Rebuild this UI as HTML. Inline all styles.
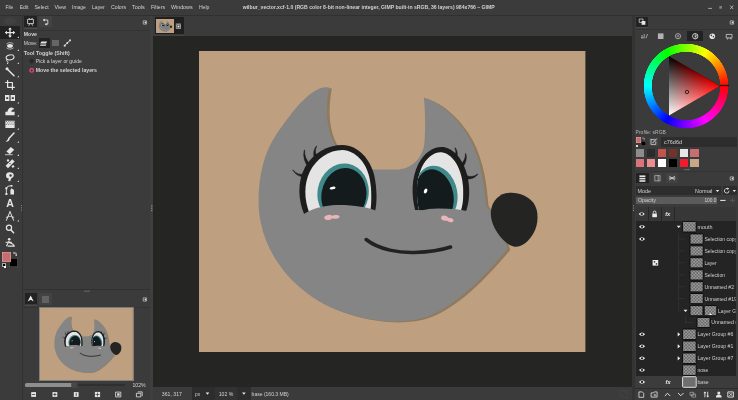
<!DOCTYPE html>
<html><head><meta charset="utf-8"><title>GIMP</title>
<style>
html,body{margin:0;padding:0;background:#3b3b3b;}
body{width:738px;height:400px;position:relative;overflow:hidden;font-family:"Liberation Sans",sans-serif;font-size:5.2px;color:#dcdcdc;line-height:1;}
.a{position:absolute;}
svg{position:absolute;}
svg text{font-family:"Liberation Sans",sans-serif;}
#wheel{position:absolute;left:643.4px;top:43.2px;width:85.4px;height:85.4px;border-radius:50%;
 background:conic-gradient(from 90deg,#ff0000,#ff00ff,#0000ff,#00ffff,#00ff00,#ffff00,#ff0000);
 -webkit-mask:radial-gradient(circle closest-side,transparent 33.9px,#000 34.4px,#000 42px,transparent 42.5px);
 mask:radial-gradient(circle closest-side,transparent 33.9px,#000 34.4px,#000 42px,transparent 42.5px);}
</style></head><body>
<svg width="0" height="0" style="left:0;top:0"><defs>
<symbol id="wilbur" viewBox="199.4 51 386.4 301" preserveAspectRatio="none">
<rect x="199" y="50" width="388" height="303" fill="#bea080"/>
<path d="M329.5 87.5 C326.5 87 323.5 87.2 320.5 88.25 C304 95 289 116.8 277 134 C264 152.7 259 177.2 259 200 C259 208 259.5 215 261 222 C269 262 300 296 340 311 C370 322 405 325 428 316.5 C457 306 487 274 508 249 L500 225 L486.3 205 L485.75 200 C483.9 176.5 479.1 151.6 466 132 C456 117 441.5 102.9 424.3 97.5 C425 104 425.6 116 425.5 127.5 L425 140 C424.4 158 412 169.6 396 169.6 L376 169.6 C352 169.6 328.3 150 327.3 113 C327.2 104 328.2 95 329.5 87.5 Z" fill="#907a5e" transform="translate(2.7,1)"/>
<path d="M329.5 87.5 C326.5 87 323.5 87.2 320.5 88.25 C304 95 289 116.8 277 134 C264 152.7 259 177.2 259 200 C259 208 259.5 215 261 222 C269 262 300 296 340 311 C370 322 405 325 428 316.5 C457 306 487 274 508 249 L500 225 L486.3 205 L485.75 200 C483.9 176.5 479.1 151.6 466 132 C456 117 441.5 102.9 424.3 97.5 C425 104 425.6 116 425.5 127.5 L425 140 C424.4 158 412 169.6 396 169.6 L376 169.6 C352 169.6 328.3 150 327.3 113 C327.2 104 328.2 95 329.5 87.5 Z" fill="#868585"/>
<clipPath id="lw"><path d="M309.8 213 C304.8 200 303.8 185 310.3 171.5 C317 158.5 329 150 343 150 C356 151 366 161.5 369.8 177.5 C372.4 190 372.4 202 370.6 211 Z"/></clipPath>
<clipPath id="rw"><path d="M419.4 210 C416.3 195 416.3 180 422 167.8 C426.8 157.5 434.5 151.4 443 152.4 C454 154.4 462.6 169.5 463.6 188 C464.1 198 463.2 205 461.2 211 Z"/></clipPath>
<g>
<path d="M304.5 214 C298.5 200 297.5 182 305.5 167 C313.5 153 328 145 343 145 C358.5 145.5 370.5 158.5 374.8 176 C377.5 190 377.5 202 375.5 211 Z" fill="#1d1d1d"/>
<g clip-path="url(#lw)">
<rect x="295" y="140" width="90" height="80" fill="#e4e4e4"/>
<ellipse cx="343.5" cy="193" rx="25.6" ry="29.6" fill="#3f898b" transform="rotate(10 343.5 193)"/>
<ellipse cx="344.3" cy="195.2" rx="22.4" ry="27.4" fill="#131b1c" transform="rotate(10 344.3 195.2)"/>
<ellipse cx="333" cy="188" rx="3" ry="1.4" fill="#fff" transform="rotate(-12 333 188)"/>
</g></g>
<g>
<path d="M415.5 210 C411.7 195 411.7 178 418.7 164 C424.7 152 434.5 146 444 147 C458.5 149.5 468.5 168 469.5 188 C470 198 468.5 205 466.5 211 Z" fill="#1d1d1d"/>
<g clip-path="url(#rw)">
<rect x="405" y="140" width="70" height="80" fill="#e4e4e4"/>
<ellipse cx="436.4" cy="194" rx="21.3" ry="28.5" fill="#3f898b" transform="rotate(-11 436.4 194)"/>
<ellipse cx="434.8" cy="196" rx="19" ry="27" fill="#131b1c" transform="rotate(-11 434.8 196)"/>
<ellipse cx="426" cy="191" rx="1.6" ry="2.6" fill="#fff" transform="rotate(25 426 191)"/>
</g></g>
<path d="M296 224 C300 212 320 205 340 205 C355 205 368 207 380 212 L380 226 L296 226 Z" fill="#868585"/>
<path d="M408 224 C412 211 425 208.5 440 208.5 C452 208.5 462 209.5 472 212 L472 226 L408 226 Z" fill="#868585"/>
<ellipse cx="328.8" cy="217.4" rx="4.2" ry="2.5" fill="#e9b5ba" transform="rotate(-8 328.8 217.4)"/>
<ellipse cx="336" cy="216.9" rx="4" ry="1.8" fill="#e9b5ba" transform="rotate(-5 336 216.9)"/>
<ellipse cx="445" cy="218.2" rx="3.6" ry="2.5" fill="#e9b5ba" transform="rotate(15 445 218.2)"/>
<ellipse cx="450.5" cy="220" rx="3.4" ry="2.1" fill="#e9b5ba" transform="rotate(15 450.5 220)"/>
<g fill="#1d1d1d" stroke="#1d1d1d" stroke-width="0.5" stroke-linejoin="round">
<path d="M306.1 173.5 Q298.3 176.2 293.5 169.9 L293.1 170.1 Q297.7 177.8 306.9 176.9 Z"/>
<path d="M311.3 164.8 Q304.4 158.7 305.0 150.0 L304.6 150.0 Q302.6 159.3 308.7 167.2 Z"/>
<path d="M318.3 157.7 Q313.9 152.0 317.2 146.1 L316.8 145.9 Q312.1 152.0 315.3 159.5 Z"/>
<path d="M465.5 178.7 Q473.2 180.1 478.2 174.4 L477.8 174.0 Q472.8 178.3 466.5 175.3 Z"/>
<path d="M462.8 168.1 Q468.3 160.2 466.2 153.6 L465.8 153.6 Q466.3 159.8 460.2 165.9 Z"/>
<path d="M456.2 159.8 Q459.7 153.0 455.6 147.7 L455.2 147.9 Q457.9 153.0 453.4 157.8 Z"/>
</g>
<path d="M366.5 239.5 C380 250 400 253 415 252.5 C430 252 442 250 451 247" fill="none" stroke="#222" stroke-width="3.5" stroke-linecap="round"/>
<path d="M491.2 214 C491 204 497 195.5 506 193.3 C516 191 528 195 534 203 C539.5 211 539 224 534 233 C529 242 521 248 514 246.5 C507 245 499 236 494.5 227 C492.5 223 491.3 218 491.2 214 Z" fill="#242423"/>
</symbol>
<pattern id="chk" x="0.4" y="0.2" width="3.2" height="3.2" patternUnits="userSpaceOnUse"><rect width="3.2" height="3.2" fill="#696969"/><rect width="1.6" height="1.6" fill="#9b9b9b"/><rect x="1.6" y="1.6" width="1.6" height="1.6" fill="#9b9b9b"/></pattern>
<clipPath id="layclip"><rect x="635.5" y="220.6" width="100.2" height="167.4"/></clipPath>
<linearGradient id="g1" gradientUnits="userSpaceOnUse" x1="669" y1="56.6" x2="694.46" y2="100.73"><stop offset="0" stop-color="#000000"/><stop offset="1" stop-color="#ff0000"/></linearGradient>
<linearGradient id="g2" gradientUnits="userSpaceOnUse" x1="694.46" y1="71.27" x2="669" y2="115.4"><stop offset="0" stop-color="#000000"/><stop offset="1" stop-color="#00ffff"/></linearGradient>
</defs></svg>
<div class="a" style="left:0px;top:0px;width:738px;height:400px;background:#3b3b3b;"></div>
<div class="a" style="left:0px;top:14.5px;width:738px;height:1px;background:#303030;"></div>
<div class="a" style="left:153.3px;top:36px;width:478.7px;height:350.8px;background:#252524;"></div>
<div class="a" style="left:150.2px;top:16px;width:3.1px;height:384px;background:#3f3f3f;"></div>
<div class="a" style="left:632px;top:16px;width:3.4px;height:384px;background:#343434;"></div>
<div class="a" style="left:0px;top:26.3px;width:19.8px;height:12.4px;background:#222222;"></div>
<div class="a" style="left:21.6px;top:16px;width:1px;height:384px;background:#323232;"></div>
<div class="a" style="left:24.4px;top:16.2px;width:12.6px;height:11px;background:#222222;"></div>
<div class="a" style="left:24.4px;top:28px;width:12.6px;height:0.8px;background:#4a4a4a;"></div>
<div class="a" style="left:39.3px;top:16.2px;width:12.3px;height:11px;background:#424242;"></div>
<div class="a" style="left:23px;top:29.6px;width:127px;height:0.7px;background:#333333;"></div>
<div class="a" style="left:38.9px;top:38.4px;width:10.9px;height:9.2px;background:#222222;"></div>
<div class="a" style="left:52.4px;top:40px;width:6.5px;height:6.4px;background:#666666;"></div>
<div class="a" style="left:23px;top:289.2px;width:127px;height:0.7px;background:#303030;"></div>
<div class="a" style="left:24.6px;top:292.8px;width:12.3px;height:11.1px;background:#222222;"></div>
<div class="a" style="left:24.6px;top:304.6px;width:12.3px;height:0.8px;background:#4a4a4a;"></div>
<div class="a" style="left:39.3px;top:292.8px;width:12.4px;height:12.2px;background:#424242;"></div>
<div class="a" style="left:42.1px;top:296px;width:7px;height:7px;background:#626262;"></div>
<div class="a" style="left:23px;top:306.6px;width:127px;height:0.7px;background:#333333;"></div>
<div class="a" style="left:153.3px;top:386.8px;width:478.7px;height:13.2px;background:#3b3b3b;"></div>
<div class="a" style="left:191.7px;top:387px;width:22.9px;height:13px;background:#2d2d2d;"></div>
<div class="a" style="left:215px;top:387px;width:22px;height:13px;background:#323232;"></div>
<div class="a" style="left:237px;top:387px;width:13.6px;height:13px;background:#2d2d2d;"></div>
<div class="a" style="left:636.1px;top:16.7px;width:12.2px;height:9.9px;background:#222222;"></div>
<div class="a" style="left:636.1px;top:27.4px;width:12.2px;height:0.8px;background:#4a4a4a;"></div>
<div class="a" style="left:635.4px;top:29.2px;width:102.6px;height:0.7px;background:#333333;"></div>
<div class="a" style="left:687.4px;top:31px;width:15.8px;height:9.8px;background:#222222;"></div>
<div class="a" style="left:661px;top:137px;width:76px;height:9.8px;background:#2d2d2d;"></div>
<div class="a" style="left:649px;top:137.7px;width:8.8px;height:8.8px;background:#454545;"></div>
<div class="a" style="left:641px;top:141.4px;width:4.5px;height:5.1px;background:#000000;box-shadow:inset 0 0 0 0.4px #666;"></div>
<div class="a" style="left:636.1px;top:137.4px;width:4.9px;height:5.4px;background:#c76d6d;box-shadow:inset 0 0 0 0.5px #e0a0a0;"></div>
<div class="a" style="left:636.1px;top:148.7px;width:8.1px;height:8.3px;background:#8c8c8c;"></div>
<div class="a" style="left:646.97px;top:148.7px;width:8.1px;height:8.3px;background:#2b2b2b;"></div>
<div class="a" style="left:657.84px;top:148.7px;width:8.1px;height:8.3px;background:#c4524e;"></div>
<div class="a" style="left:668.71px;top:148.7px;width:8.1px;height:8.3px;background:#74322a;"></div>
<div class="a" style="left:679.58px;top:148.7px;width:8.1px;height:8.3px;background:#e6e6e6;"></div>
<div class="a" style="left:690.45px;top:148.7px;width:8.1px;height:8.3px;background:#c96d70;"></div>
<div class="a" style="left:636.1px;top:159px;width:8.1px;height:8.1px;background:#d9747a;"></div>
<div class="a" style="left:646.97px;top:159px;width:8.1px;height:8.1px;background:#ec8d90;"></div>
<div class="a" style="left:657.84px;top:159px;width:8.1px;height:8.1px;background:#ffffff;"></div>
<div class="a" style="left:668.71px;top:159px;width:8.1px;height:8.1px;background:#000000;"></div>
<div class="a" style="left:679.58px;top:159px;width:8.1px;height:8.1px;background:#f01c2d;"></div>
<div class="a" style="left:690.45px;top:159px;width:8.1px;height:8.1px;background:#c8a786;"></div>
<div class="a" style="left:635.4px;top:170.8px;width:102.6px;height:0.7px;background:#333333;"></div>
<div class="a" style="left:636.1px;top:172.9px;width:12.6px;height:10.5px;background:#222222;"></div>
<div class="a" style="left:652.8px;top:172.9px;width:9.6px;height:10.5px;background:#424242;"></div>
<div class="a" style="left:665.9px;top:172.9px;width:12.2px;height:10.5px;background:#424242;"></div>
<div class="a" style="left:636.1px;top:186.4px;width:84.9px;height:8.7px;background:#2d2d2d;"></div>
<div class="a" style="left:722.8px;top:186.4px;width:14.3px;height:8.7px;background:#2d2d2d;"></div>
<div class="a" style="left:636.1px;top:196.5px;width:81.1px;height:7.9px;background:#5c5c5c;"></div>
<div class="a" style="left:635.5px;top:206.9px;width:100.2px;height:181.6px;background:#242424;"></div>
<div class="a" style="left:635.5px;top:206.9px;width:100.2px;height:13.7px;background:#373737;"></div>
<div class="a" style="left:648.3px;top:206.9px;width:0.6px;height:14px;background:#262626;"></div>
<div class="a" style="left:661px;top:206.9px;width:0.6px;height:14px;background:#262626;"></div>
<div class="a" style="left:674px;top:206.9px;width:0.6px;height:14px;background:#262626;"></div>
<div class="a" style="left:635.5px;top:376.3px;width:100.2px;height:11.4px;background:#3c3c3c;"></div>
<div class="a" style="left:635.4px;top:388.5px;width:102.6px;height:11.5px;background:#3b3b3b;"></div>
<div class="a" style="left:635.4px;top:388.3px;width:102.6px;height:0.6px;background:#2c2c2c;"></div>
<div class="a" style="left:9px;top:258px;width:8.6px;height:8.6px;background:#000000;box-shadow:inset 0 0 0 0.6px #6a6a6a;"></div>
<div class="a" style="left:2.4px;top:252.4px;width:9px;height:9.2px;background:#c76d6d;box-shadow:inset 0 0 0 0.6px #dca4a4;"></div>
<div class="a" style="left:3.2px;top:264.4px;width:2px;height:2px;background:#000;outline:0.4px solid #aaa;"></div>
<div class="a" style="left:4.4px;top:265.6px;width:2px;height:2px;background:#fff;"></div>
<div class="a" style="left:24.9px;top:383.8px;width:99.7px;height:2.4px;background:#2f2f2f;border-radius:1.2px;"></div>
<div class="a" style="left:24.6px;top:383.4px;width:48px;height:3.2px;background:#8e8e8e;border-radius:1.6px;"></div>
<div class="a" style="left:636.4px;top:145.3px;width:1.4px;height:1.4px;background:#ddd;"></div>
<svg style="left:199.4px;top:51px;overflow:hidden" width="386.4" height="301"><use href="#wilbur" x="0" y="0" width="386.4" height="301"/></svg>
<!-- nav thumbnail -->
<svg style="left:40.2px;top:308.1px;overflow:hidden;outline:0.4px solid rgba(255,255,255,0.35)" width="92.9" height="72.2"><use href="#wilbur" x="0" y="0" width="92.9" height="72.2"/></svg>
<!-- tab thumbnail -->
<div class="a" style="left:155.2px;top:16.9px;width:28.7px;height:17.6px;background:#1f1f1f"></div>
<div class="a" style="left:155px;top:34.6px;width:29px;height:1px;background:#444"></div>
<svg style="left:155.8px;top:18.8px;overflow:hidden" width="18.4" height="14"><use href="#wilbur" x="0" y="0" width="18.4" height="14"/></svg>
<div id="wheel"></div>
<svg style="left:0;top:0;isolation:isolate" width="738" height="400" viewBox="0 0 738 400">
<polygon points="720,86 669,56.6 669,115.4" fill="url(#g1)"/>
<polygon points="720,86 669,56.6 669,115.4" fill="url(#g2)" style="mix-blend-mode:screen"/>
</svg>
<svg style="left:0;top:0;will-change:transform;opacity:0.999" width="738" height="400" viewBox="0 0 738 400">
<path d="M719.8 85.5 H729" stroke="#111" stroke-width="1.2"/>
<circle cx="687" cy="92" r="1.7" fill="none" stroke="#111" stroke-width="0.8"/>
<text x="5.5" y="9.31" font-size="5.3" fill="#d4d4d4" textLength="7.7" lengthAdjust="spacingAndGlyphs" text-anchor="start">File</text>
<text x="19.8" y="9.31" font-size="5.3" fill="#d4d4d4" textLength="8.5" lengthAdjust="spacingAndGlyphs" text-anchor="start">Edit</text>
<text x="34.4" y="9.31" font-size="5.3" fill="#d4d4d4" textLength="14.3" lengthAdjust="spacingAndGlyphs" text-anchor="start">Select</text>
<text x="54.5" y="9.31" font-size="5.3" fill="#d4d4d4" textLength="11.5" lengthAdjust="spacingAndGlyphs" text-anchor="start">View</text>
<text x="72" y="9.31" font-size="5.3" fill="#d4d4d4" textLength="13.8" lengthAdjust="spacingAndGlyphs" text-anchor="start">Image</text>
<text x="91.9" y="9.31" font-size="5.3" fill="#d4d4d4" textLength="12.9" lengthAdjust="spacingAndGlyphs" text-anchor="start">Layer</text>
<text x="111" y="9.31" font-size="5.3" fill="#d4d4d4" textLength="15.0" lengthAdjust="spacingAndGlyphs" text-anchor="start">Colors</text>
<text x="132" y="9.31" font-size="5.3" fill="#d4d4d4" textLength="12.7" lengthAdjust="spacingAndGlyphs" text-anchor="start">Tools</text>
<text x="151" y="9.31" font-size="5.3" fill="#d4d4d4" textLength="14.0" lengthAdjust="spacingAndGlyphs" text-anchor="start">Filters</text>
<text x="171" y="9.31" font-size="5.3" fill="#d4d4d4" textLength="21.6" lengthAdjust="spacingAndGlyphs" text-anchor="start">Windows</text>
<text x="198.9" y="9.31" font-size="5.3" fill="#d4d4d4" textLength="10.5" lengthAdjust="spacingAndGlyphs" text-anchor="start">Help</text>
<text x="242.7" y="9.31" font-size="5.3" fill="#d4d4d4" font-weight="bold" textLength="252.0" lengthAdjust="spacingAndGlyphs" text-anchor="start">wilbur_vector.xcf-1.0 (RGB color 8-bit non-linear integer, GIMP built-in sRGB, 36 layers) 984x766 – GIMP</text>
<path d="M708.2 8.4 h3.8" stroke="#b0b0b0" stroke-width="0.9" fill="none"/>
<rect x="719.3" y="5.9" width="2.7" height="2.9" rx="0.6" fill="#808080"/>
<path d="M730.2 5.5 l3 3.5 m0 -3.5 l-3 3.5" stroke="#b8b8b8" stroke-width="0.9" fill="none"/>
<text x="23.7" y="36.41" font-size="5.3" fill="#d4d4d4" font-weight="bold" textLength="13.3" lengthAdjust="spacingAndGlyphs" text-anchor="start">Move</text>
<text x="23.7" y="45.21" font-size="5.3" fill="#d4d4d4" textLength="13.8" lengthAdjust="spacingAndGlyphs" text-anchor="start">Move:</text>
<text x="23.7" y="54.81" font-size="5.3" fill="#d4d4d4" font-weight="bold" textLength="46.2" lengthAdjust="spacingAndGlyphs" text-anchor="start">Tool Toggle  (Shift)</text>
<circle cx="31.7" cy="61.1" r="2.3" fill="#282828"/>
<text x="35.8" y="63.01" font-size="5.3" fill="#d4d4d4" textLength="46.0" lengthAdjust="spacingAndGlyphs" text-anchor="start">Pick a layer or guide</text>
<circle cx="31.7" cy="70.4" r="2.4" fill="#e8457e"/><circle cx="31.7" cy="70.4" r="1" fill="#2a2a2a"/>
<text x="35.8" y="72.31" font-size="5.3" fill="#d4d4d4" font-weight="bold" textLength="61.2" lengthAdjust="spacingAndGlyphs" text-anchor="start">Move the selected layers</text>
<path d="M30.7 295.4 l3 6 l-3 -1.6 l-3 1.6 z" fill="#f0f0f0"/>
<rect x="84.5" y="290.6" width="1" height="1" fill="#9a9a9a"/>
<rect x="86.5" y="290.6" width="1" height="1" fill="#9a9a9a"/>
<rect x="88.5" y="290.6" width="1" height="1" fill="#9a9a9a"/>
<text x="161.8" y="395.51" font-size="5.3" fill="#d4d4d4" textLength="20.1" lengthAdjust="spacingAndGlyphs" text-anchor="start">361, 317</text>
<text x="195" y="395.51" font-size="5.3" fill="#d4d4d4" textLength="5.0" lengthAdjust="spacingAndGlyphs" text-anchor="start">px</text>
<text x="218.7" y="395.51" font-size="5.3" fill="#d4d4d4" textLength="14.6" lengthAdjust="spacingAndGlyphs" text-anchor="start">102 %</text>
<text x="251.6" y="395.51" font-size="5.3" fill="#d4d4d4" textLength="37.2" lengthAdjust="spacingAndGlyphs" text-anchor="start">base (160.3 MB)</text>
<path d="M205.7 392.6 h3.6 l-1.8 2.2 z" fill="#eee"/><path d="M242.1 392.6 h3.6 l-1.8 2.2 z" fill="#eee"/>
<text x="635.6" y="134.01" font-size="5.3" fill="#b8b8b8" textLength="30.3" lengthAdjust="spacingAndGlyphs" text-anchor="start">Profile: sRGB</text>
<text x="664" y="144.01" font-size="5.3" fill="#d4d4d4" textLength="18.0" lengthAdjust="spacingAndGlyphs" text-anchor="start">c76d6d</text>
<rect x="684.5" y="169.2" width="1" height="1" fill="#9a9a9a"/>
<rect x="686.4" y="169.2" width="1" height="1" fill="#9a9a9a"/>
<rect x="688.3" y="169.2" width="1" height="1" fill="#9a9a9a"/>
<text x="637.4" y="192.71" font-size="5.3" fill="#d4d4d4" textLength="13.6" lengthAdjust="spacingAndGlyphs" text-anchor="start">Mode</text>
<text x="695.1" y="192.71" font-size="5.3" fill="#d4d4d4" textLength="17.2" lengthAdjust="spacingAndGlyphs" text-anchor="start">Normal</text>
<path d="M715.7 189.9 h3.6 l-1.8 2.2 z" fill="#eee"/>
<text x="637.9" y="202.31" font-size="5.3" fill="#d4d4d4" textLength="18.0" lengthAdjust="spacingAndGlyphs" text-anchor="start">Opacity</text>
<text x="704.4" y="202.31" font-size="5.3" fill="#d4d4d4" textLength="12.2" lengthAdjust="spacingAndGlyphs" text-anchor="start">100.0</text>
<path d="M720.2 200.4 h5.4" stroke="#eee" stroke-width="1"/>
<path d="M729.8 200.4 h5.2 m-2.6 -2.6 v5.2" stroke="#5a5a5a" stroke-width="0.9"/>
<path d="M638.6 214 Q641.7 210.6 644.8000000000001 214 Q641.7 217.4 638.6 214 Z" fill="#e6e6e6"/><circle cx="641.7" cy="214" r="1.15" fill="#252525"/>
<rect x="652.3" y="213.6" width="4.6" height="3.6" fill="#ededed"/><path d="M653.3 213.6 v-1.3 a1.3 1.3 0 0 1 2.6 0 v1.3" fill="none" stroke="#ededed" stroke-width="0.9"/>
<text x="665.2" y="216" font-size="5.8" font-style="italic" font-weight="bold" fill="#ededed">fx</text>
<g clip-path="url(#layclip)">
<path d="M638.9 226.7 Q642 223.29999999999998 645.1 226.7 Q642 230.1 638.9 226.7 Z" fill="#e6e6e6"/><circle cx="642" cy="226.7" r="1.15" fill="#252525"/>
<rect x="682.6" y="221.39999999999998" width="13.6" height="10.6" rx="0.8" fill="url(#chk)" stroke="#0d0d0d" stroke-width="1"/>
<path d="M676.7 225.7 h4 l-2 2.4 z" fill="#eee"/>
<text x="697.5" y="228.61" font-size="5.3" fill="#d2d2d2" textLength="15.0" lengthAdjust="spacingAndGlyphs" text-anchor="start">mouth</text>
<path d="M638.9 239 Q642 235.6 645.1 239 Q642 242.4 638.9 239 Z" fill="#e6e6e6"/><circle cx="642" cy="239" r="1.15" fill="#252525"/>
<rect x="690" y="233.9" width="13.2" height="10.2" rx="0.8" fill="url(#chk)" stroke="#0d0d0d" stroke-width="1"/>
<path d="M678.6 239 h6.4" stroke="#3c3c3c" stroke-width="0.6"/>
<text x="704.4" y="240.91" font-size="5.3" fill="#d2d2d2" textLength="32.8" lengthAdjust="spacingAndGlyphs" text-anchor="start">Selection copy</text>
<rect x="690" y="245.8" width="13.2" height="10.2" rx="0.8" fill="url(#chk)" stroke="#0d0d0d" stroke-width="1"/>
<path d="M678.6 250.9 h6.4" stroke="#3c3c3c" stroke-width="0.6"/>
<text x="704.4" y="252.81" font-size="5.3" fill="#d2d2d2" textLength="32.8" lengthAdjust="spacingAndGlyphs" text-anchor="start">Selection copy</text>
<rect x="690" y="257.7" width="13.2" height="10.2" rx="0.8" fill="url(#chk)" stroke="#0d0d0d" stroke-width="1"/>
<path d="M678.6 262.8 h6.4" stroke="#3c3c3c" stroke-width="0.6"/>
<text x="704.4" y="264.71" font-size="5.3" fill="#d2d2d2" textLength="12.2" lengthAdjust="spacingAndGlyphs" text-anchor="start">Layer</text>
<rect x="690" y="269.79999999999995" width="13.2" height="10.2" rx="0.8" fill="url(#chk)" stroke="#0d0d0d" stroke-width="1"/>
<path d="M678.6 274.9 h6.4" stroke="#3c3c3c" stroke-width="0.6"/>
<text x="704.4" y="276.81" font-size="5.3" fill="#d2d2d2" textLength="20.6" lengthAdjust="spacingAndGlyphs" text-anchor="start">Selection</text>
<rect x="690" y="281.7" width="13.2" height="10.2" rx="0.8" fill="url(#chk)" stroke="#0d0d0d" stroke-width="1"/>
<path d="M678.6 286.8 h6.4" stroke="#3c3c3c" stroke-width="0.6"/>
<text x="704.4" y="288.71" font-size="5.3" fill="#d2d2d2" textLength="29.7" lengthAdjust="spacingAndGlyphs" text-anchor="start">Unnamed #2</text>
<rect x="690" y="293.5" width="13.2" height="10.2" rx="0.8" fill="url(#chk)" stroke="#0d0d0d" stroke-width="1"/>
<path d="M678.6 298.6 h6.4" stroke="#3c3c3c" stroke-width="0.6"/>
<text x="704.4" y="300.51" font-size="5.3" fill="#d2d2d2" textLength="32.6" lengthAdjust="spacingAndGlyphs" text-anchor="start">Unnamed #19</text>
<rect x="690" y="305.59999999999997" width="13" height="10.2" rx="0.8" fill="url(#chk)" stroke="#0d0d0d" stroke-width="1"/>
<rect x="704.2" y="305.59999999999997" width="12.6" height="10.2" rx="0.8" fill="url(#chk)" stroke="#0d0d0d" stroke-width="1"/>
<path d="M683.5 309.7 h4 l-2 2.4 z" fill="#eee"/>
<text x="718" y="312.61" font-size="5.3" fill="#d2d2d2" textLength="35.7" lengthAdjust="spacingAndGlyphs" text-anchor="start">Layer Group #4</text>
<rect x="697" y="317.4" width="13" height="10.2" rx="0.8" fill="url(#chk)" stroke="#0d0d0d" stroke-width="1"/>
<path d="M685.5 316.5 v6 h8" stroke="#3c3c3c" stroke-width="0.6" fill="none"/>
<text x="711.3" y="324.41" font-size="5.3" fill="#d2d2d2" textLength="32.6" lengthAdjust="spacingAndGlyphs" text-anchor="start">Unnamed #17</text>
<path d="M638.9 334.3 Q642 330.90000000000003 645.1 334.3 Q642 337.7 638.9 334.3 Z" fill="#e6e6e6"/><circle cx="642" cy="334.3" r="1.15" fill="#252525"/>
<rect x="682.6" y="329.0" width="13.6" height="10.6" rx="0.8" fill="url(#chk)" stroke="#0d0d0d" stroke-width="1"/>
<path d="M677.7 332.2 v4.2 l2.5 -2.1 z" fill="#eee"/>
<text x="697.5" y="336.21" font-size="5.3" fill="#d2d2d2" textLength="35.8" lengthAdjust="spacingAndGlyphs" text-anchor="start">Layer Group #6</text>
<path d="M638.9 346.3 Q642 342.90000000000003 645.1 346.3 Q642 349.7 638.9 346.3 Z" fill="#e6e6e6"/><circle cx="642" cy="346.3" r="1.15" fill="#252525"/>
<rect x="682.6" y="341.0" width="13.6" height="10.6" rx="0.8" fill="url(#chk)" stroke="#0d0d0d" stroke-width="1"/>
<path d="M677.7 344.2 v4.2 l2.5 -2.1 z" fill="#eee"/>
<text x="697.5" y="348.21" font-size="5.3" fill="#d2d2d2" textLength="35.8" lengthAdjust="spacingAndGlyphs" text-anchor="start">Layer Group #1</text>
<path d="M638.9 358.3 Q642 354.90000000000003 645.1 358.3 Q642 361.7 638.9 358.3 Z" fill="#e6e6e6"/><circle cx="642" cy="358.3" r="1.15" fill="#252525"/>
<rect x="682.6" y="353.0" width="13.6" height="10.6" rx="0.8" fill="url(#chk)" stroke="#0d0d0d" stroke-width="1"/>
<path d="M677.7 356.2 v4.2 l2.5 -2.1 z" fill="#eee"/>
<text x="697.5" y="360.21" font-size="5.3" fill="#d2d2d2" textLength="35.8" lengthAdjust="spacingAndGlyphs" text-anchor="start">Layer Group #7</text>
<path d="M638.9 370.1 Q642 366.70000000000005 645.1 370.1 Q642 373.5 638.9 370.1 Z" fill="#e6e6e6"/><circle cx="642" cy="370.1" r="1.15" fill="#252525"/>
<rect x="682.6" y="364.8" width="13.6" height="10.6" rx="0.8" fill="url(#chk)" stroke="#0d0d0d" stroke-width="1"/>
<text x="697.5" y="372.01" font-size="5.3" fill="#d2d2d2" textLength="10.8" lengthAdjust="spacingAndGlyphs" text-anchor="start">nose</text>
<path d="M638.9 382 Q642 378.6 645.1 382 Q642 385.4 638.9 382 Z" fill="#e6e6e6"/><circle cx="642" cy="382" r="1.15" fill="#252525"/>
<rect x="682.6" y="376.7" width="13.6" height="10.6" rx="0.8" fill="#6f6f6f" stroke="#e0e0e0" stroke-width="1"/>
<text x="697.5" y="383.91" font-size="5.3" fill="#d2d2d2" textLength="11.2" lengthAdjust="spacingAndGlyphs" text-anchor="start">base</text>
<path d="M678.6 232.5 V310.7 h3" stroke="#3c3c3c" stroke-width="0.6" fill="none"/>
</g>
<rect x="696" y="264.5" width="1" height="1" fill="#c0504d"/><rect x="703.5" y="324.5" width="1" height="1" fill="#c0504d"/>
<path d="M709 315 q1.5 -3 3 0 z" fill="#f0f0f0"/>
<rect x="652.6" y="260" width="5.6" height="5.6" fill="#ededed"/><rect x="653.8" y="261.2" width="1.4" height="1.4" fill="#252525"/><rect x="655.8" y="263.2" width="1.4" height="1.4" fill="#252525"/>
<text x="665.6" y="383.8" font-size="5.6" font-style="italic" font-weight="bold" fill="#ededed">fx</text>
<path d="M6 32.6 H14 M10 28.6 V36.6" fill="none" stroke="#e6e6e6" stroke-width="1.3" stroke-linecap="round" stroke-linejoin="round" />
<path d="M4.8 32.6 l2.2 -1.9 v3.8 z M15.2 32.6 l-2.2 -1.9 v3.8 z M10 27.400000000000002 l-1.9 2.2 h3.8 z M10 37.800000000000004 l-1.9 -2.2 h3.8 z" fill="#e6e6e6"/>
<ellipse cx="10" cy="45.9" rx="2.9" ry="1.8" fill="#e6e6e6"/>
<path d="M6.8 43.7 Q10 41.7 13.2 43.7" fill="none" stroke="#e6e6e6" stroke-width="0.7" stroke-linecap="round" stroke-linejoin="round" stroke-dasharray="1.2 0.8"/>
<path d="M6.8 48.1 Q10 50.1 13.2 48.1" fill="none" stroke="#e6e6e6" stroke-width="0.7" stroke-linecap="round" stroke-linejoin="round" stroke-dasharray="1.2 0.8"/>
<ellipse cx="10.3" cy="57.4" rx="4" ry="2.5" fill="none" stroke="#e6e6e6" stroke-width="1.1" transform="rotate(-12 10 58.6)"/>
<path d="M7.2 59.2 q-1.2 1.6 0.2 2.4 q1.2 0.8 0.2 2.2" fill="none" stroke="#e6e6e6" stroke-width="1.0" stroke-linecap="round" stroke-linejoin="round" />
<path d="M7.4 69.2 L14 75.8" fill="none" stroke="#e6e6e6" stroke-width="1.5" stroke-linecap="round" stroke-linejoin="round" />
<circle cx="7" cy="68.8" r="1.5" fill="#e6e6e6"/>
<path d="M7.6 80.5 V87.30000000000001 H14.4 M5.6 82.5 H12.4 V89.30000000000001" fill="none" stroke="#e6e6e6" stroke-width="1.2" stroke-linecap="round" stroke-linejoin="round" />
<path d="M5 95.1 h4.4 v6 h-4.4 z M10.6 95.1 h4.4 v6 h-4.4 z" fill="#e6e6e6"/>
<path d="M6.2 97.3 h2 v1.6 h-2 z M11.8 97.3 h2 v1.6 h-2 z" fill="#3b3b3b"/>
<path d="M5.4 115.2 v-3.4 h2 q0.6 -4 4.2 -4.2 q2.2 0 2.6 1.6 q-2.6 -0.4 -3 2.6 h3.4 v3.4 z" fill="#e6e6e6"/>
<path d="M5.4 120.7 h9.2 v7.2 h-9.2 z" fill="#e6e6e6"/>
<rect x="6.0" y="121.3" width="0.9" height="0.7" fill="#3b3b3b"/>
<rect x="7.1" y="122.6" width="0.9" height="0.7" fill="#3b3b3b"/>
<rect x="6.0" y="123.9" width="0.9" height="0.7" fill="#3b3b3b"/>
<rect x="8.2" y="121.3" width="0.9" height="0.7" fill="#3b3b3b"/>
<rect x="9.3" y="122.6" width="0.9" height="0.7" fill="#3b3b3b"/>
<rect x="8.2" y="123.9" width="0.9" height="0.7" fill="#3b3b3b"/>
<rect x="10.4" y="121.3" width="0.9" height="0.7" fill="#3b3b3b"/>
<rect x="11.5" y="122.6" width="0.9" height="0.7" fill="#3b3b3b"/>
<rect x="10.4" y="123.9" width="0.9" height="0.7" fill="#3b3b3b"/>
<rect x="12.6" y="121.3" width="0.9" height="0.7" fill="#3b3b3b"/>
<rect x="13.7" y="122.6" width="0.9" height="0.7" fill="#3b3b3b"/>
<rect x="12.6" y="123.9" width="0.9" height="0.7" fill="#3b3b3b"/>
<path d="M14 133.0 L8.8 138.6" fill="none" stroke="#e6e6e6" stroke-width="1.5" stroke-linecap="round" stroke-linejoin="round" />
<path d="M8.4 138.0 l1.4 1.4 q-1.6 2.8 -4.2 2.4 q1.8 -1 2.8 -3.8 z" fill="#e6e6e6"/>
<path d="M6.4 151.5 l4.4 -4.6 l3.4 2.8 l-4.4 4.6 z" fill="#e6e6e6"/>
<path d="M5.4 154.7 h7" fill="none" stroke="#e6e6e6" stroke-width="0.8" stroke-linecap="round" stroke-linejoin="round" />
<path d="M5.6 165.79999999999998 l6.6 -6.6 l2.4 2.4 l-6.6 6.6 z" fill="#e6e6e6"/>
<path d="M6.6 160.0 l1.6 -1 l1.2 1.8 l-1.6 1.2 z M11.4 166.2 l1.8 -1.2 l1.4 1.6 l-1.8 1.4z" fill="#e6e6e6"/>
<circle cx="10" cy="163.6" r="0.7" fill="#3b3b3b"/>
<path d="M6 175.7 q0 -3.4 3.8 -3.4 q3.8 0 4 3 q0 2.6 -2.6 3.2 l-1 2.8 l-2 -0.2 l0.6 -2.6 q-2.8 -0.4 -2.8 -2.8 z" fill="#e6e6e6"/>
<circle cx="10.6" cy="175.5" r="1.2" fill="#3b3b3b"/>
<path d="M6.4 193.9 V188.3 Q6.6 185.9 10.4 185.70000000000002" fill="none" stroke="#e6e6e6" stroke-width="0.9" stroke-linecap="round" stroke-linejoin="round" />
<path d="M5.4 187.3 h2 v2 h-2 z M5.4 192.9 h2 v2 h-2 z M10.6 184.9 h1.8 v1.8 h-1.8z" fill="#e6e6e6"/>
<path d="M11.4 188.3 l2.6 1.6 v4.6 h-3.6 v-4.6 z" fill="#e6e6e6"/>
<text x="10" y="206.6" font-size="10.5" font-weight="bold" fill="#e6e6e6" text-anchor="middle">A</text>
<path d="M10 211.7 L6.4 220.29999999999998 M10 211.7 L13.6 220.29999999999998" fill="none" stroke="#e6e6e6" stroke-width="1.0" stroke-linecap="round" stroke-linejoin="round" />
<path d="M6.2 217.29999999999998 Q10 214.9 13.8 217.29999999999998" fill="none" stroke="#e6e6e6" stroke-width="0.8" stroke-linecap="round" stroke-linejoin="round" />
<circle cx="9" cy="227.79999999999998" r="2.6" fill="none" stroke="#e6e6e6" stroke-width="1.2"/>
<path d="M11 230.0 L13.6 232.79999999999998" fill="none" stroke="#e6e6e6" stroke-width="1.5" stroke-linecap="round" stroke-linejoin="round" />
<circle cx="9.2" cy="239.3" r="1.3" fill="#e6e6e6"/>
<path d="M6 242.3 h5.4 M9 241.3 l-2.4 4.4 M9.6 242.70000000000002 l3 1.2 l1.8 2.2 M8 246.10000000000002 h6.4" fill="none" stroke="#e6e6e6" stroke-width="1.1" stroke-linecap="round" stroke-linejoin="round" />
<path d="M19 36.2 v1.8 h-1.8 z" fill="#d0d0d0"/>
<path d="M19 49.2 v1.8 h-1.8 z" fill="#d0d0d0"/>
<path d="M19 62.2 v1.8 h-1.8 z" fill="#d0d0d0"/>
<path d="M19 75.39999999999999 v1.8 h-1.8 z" fill="#d0d0d0"/>
<path d="M19 101.69999999999999 v1.8 h-1.8 z" fill="#d0d0d0"/>
<path d="M19 114.8 v1.8 h-1.8 z" fill="#d0d0d0"/>
<path d="M19 127.89999999999999 v1.8 h-1.8 z" fill="#d0d0d0"/>
<path d="M19 141.0 v1.8 h-1.8 z" fill="#d0d0d0"/>
<path d="M19 154.1 v1.8 h-1.8 z" fill="#d0d0d0"/>
<path d="M19 167.2 v1.8 h-1.8 z" fill="#d0d0d0"/>
<path d="M19 180.29999999999998 v1.8 h-1.8 z" fill="#d0d0d0"/>
<path d="M19 219.7 v1.8 h-1.8 z" fill="#d0d0d0"/>
<path d="M13.6 253 h2.6 v2.6" fill="none" stroke="#e6e6e6" stroke-width="0.7" stroke-linecap="round" stroke-linejoin="round" />
<path d="M13.2 253 l1.2 -1 v2 z M16.2 256 l-1 -1.2 h2 z" fill="#e6e6e6"/>
<rect x="21" y="205" width="1" height="1" fill="#8a8a8a"/>
<rect x="21" y="207.3" width="1" height="1" fill="#8a8a8a"/>
<rect x="21" y="209.6" width="1" height="1" fill="#8a8a8a"/>
<rect x="151.2" y="205.3" width="1.2" height="1.2" fill="#9a9a9a"/>
<rect x="151.2" y="207.6" width="1.2" height="1.2" fill="#9a9a9a"/>
<rect x="151.2" y="209.9" width="1.2" height="1.2" fill="#9a9a9a"/>
<rect x="633" y="205.3" width="1" height="1" fill="#9a9a9a"/>
<rect x="633" y="207.6" width="1" height="1" fill="#9a9a9a"/>
<rect x="633" y="209.9" width="1" height="1" fill="#9a9a9a"/>
<ellipse cx="10" cy="21" rx="6" ry="3.6" fill="#424242"/>
<path d="M28 19.4 h5.4 v4.2 h-5.4 z M29 25.3 l0.6 -1.5 M32.4 25.3 l-0.6 -1.5 M29.2 18.3 l0.5 1 M32.2 18.3 l-0.5 1" fill="none" stroke="#e6e6e6" stroke-width="0.8" stroke-linecap="round" stroke-linejoin="round" />
<path d="M43.4 20 h4.4 v4.2 h-2.4" fill="none" stroke="#e6e6e6" stroke-width="0.8" stroke-linecap="round" stroke-linejoin="round" />
<path d="M43 20 l1.8 -1.5 v3 z M45 24.2 l1.6 -1.3 v2.6 z" fill="#e6e6e6"/>
<path d="M143.6 20.9 h3 v3.2 h-3 z" fill="none" stroke="#e6e6e6" stroke-width="0.6" stroke-linecap="round" stroke-linejoin="round" />
<path d="M144.4 22.5 l1.6 -1.2 v2.4 z" fill="#e6e6e6"/>
<path d="M143.6 297.9 h3 v3.2 h-3 z" fill="none" stroke="#e6e6e6" stroke-width="0.6" stroke-linecap="round" stroke-linejoin="round" />
<path d="M144.4 299.5 l1.6 -1.2 v2.4 z" fill="#e6e6e6"/>
<path d="M730.6 20.9 h3 v3.2 h-3 z" fill="none" stroke="#e6e6e6" stroke-width="0.6" stroke-linecap="round" stroke-linejoin="round" />
<path d="M731.4 22.5 l1.6 -1.2 v2.4 z" fill="#e6e6e6"/>
<path d="M730.6 176.9 h3 v3.2 h-3 z" fill="none" stroke="#e6e6e6" stroke-width="0.6" stroke-linecap="round" stroke-linejoin="round" />
<path d="M731.4 178.5 l1.6 -1.2 v2.4 z" fill="#e6e6e6"/>
<path d="M41.4 41.6 h5.8 l-1.2 2 h-5.8 z" fill="#e6e6e6"/>
<path d="M40.6 44.4 h5.8 l-0.6 1.4 h-5.8 z" fill="#e6e6e6"/>
<path d="M64.6 45.6 L70 40.4" fill="none" stroke="#e6e6e6" stroke-width="0.9" stroke-linecap="round" stroke-linejoin="round" />
<path d="M63.8 44.8 h1.8 v1.8 h-1.8z M69.2 39.6 h1.6 v1.6 h-1.6z" fill="#e6e6e6"/>
<circle cx="67.3" cy="43" r="0.9" fill="#ececec"/>
<circle cx="74.4" cy="385" r="3.3" fill="#474747"/>
<text x="132.5" y="386.91" font-size="5.3" fill="#d4d4d4" textLength="13.2" lengthAdjust="spacingAndGlyphs" text-anchor="start">102%</text>
<path d="M31.200000000000003 392.1 h4.8 v4.8 h-4.8 z" fill="#e6e6e6"/>
<path d="M32.4 394.5 h2.4" fill="none" stroke="#3b3b3b" stroke-width="0.8" stroke-linecap="round" stroke-linejoin="round" />
<path d="M52.5 392.1 h4.8 v4.8 h-4.8 z" fill="#e6e6e6"/>
<path d="M53.699999999999996 394.5 h2.4 M54.9 393.3 v2.4" fill="none" stroke="#3b3b3b" stroke-width="0.8" stroke-linecap="round" stroke-linejoin="round" />
<path d="M73.8 392.1 h4.8 v4.8 h-4.8 z" fill="#e6e6e6"/>
<path d="M76.2 393.3 v2.4" fill="none" stroke="#3b3b3b" stroke-width="0.8" stroke-linecap="round" stroke-linejoin="round" />
<path d="M94.9 391.9 h5.2 v5.2 h-5.2 z" fill="#e6e6e6"/>
<path d="M97.5 392.9 v3.2 M95.9 394.5 h3.2" fill="none" stroke="#3b3b3b" stroke-width="0.7" stroke-linecap="round" stroke-linejoin="round" />
<path d="M116.0 392.1 h4.8 v4.8 h-4.8 z" fill="none" stroke="#e6e6e6" stroke-width="0.8" stroke-linecap="round" stroke-linejoin="round" />
<path d="M117.2 393.3 h2.4 v2.4 h-2.4z" fill="#e6e6e6"/>
<path d="M136.8 393.3 h4 v3.6 h-4 z M138.20000000000002 391.9 h4 v3.8" fill="none" stroke="#e6e6e6" stroke-width="0.8" stroke-linecap="round" stroke-linejoin="round" />
<path d="M175.8 23.5 h5.2 v5.4 h-5.2 z" fill="#9a9a9a"/>
<path d="M177 24.8 l2.8 2.8 m0 -2.8 l-2.8 2.8" fill="none" stroke="#222" stroke-width="0.8" stroke-linecap="round" stroke-linejoin="round" />
<circle cx="178.4" cy="26.2" r="0.8" fill="#eee"/>
<path d="M639.6 19 h3.4 v3.4 h-3.4 z" fill="none" stroke="#e6e6e6" stroke-width="0.7" stroke-linecap="round" stroke-linejoin="round" />
<path d="M641.6 21 h3.8 v3.8 h-3.8 z" fill="#e6e6e6"/>
<path d="M641.4 37.800000000000004 h2 M642 37.800000000000004 v-2.4 M644.2 37.800000000000004 v-3.4 M646 38.0 l1.4 -3.6" fill="none" stroke="#bdbdbd" stroke-width="0.8" stroke-linecap="round" stroke-linejoin="round" />
<path d="M657.9 33.400000000000006 h5.6 v5.6 h-5.6 z" fill="#b4b4b4"/>
<circle cx="678" cy="36.2" r="2.6" fill="none" stroke="#d0d0d0" stroke-width="0.7"/><circle cx="678" cy="36.2" r="0.9" fill="none" stroke="#d0d0d0" stroke-width="0.5"/>
<circle cx="695.2" cy="36.2" r="2.7" fill="none" stroke="#e6e6e6" stroke-width="0.8"/>
<path d="M695.2 33.6 v5.2 M695.2 36.2 l2.3 -1.3 M695.2 36.2 l2.3 1.3" fill="none" stroke="#e6e6e6" stroke-width="0.6" stroke-linecap="round" stroke-linejoin="round" />
<circle cx="712.3" cy="36.2" r="2.8" fill="#e6e6e6"/><circle cx="711.4" cy="35.400000000000006" r="0.8" fill="#3b3b3b"/><circle cx="713.4" cy="36.800000000000004" r="0.8" fill="#3b3b3b"/>
<path d="M726.6 34.400000000000006 h5.4 v3.6 h-5.4 z M727.6 39.2 l0.4 -1.2 M731 39.2 l-0.4 -1.2" fill="none" stroke="#d0d0d0" stroke-width="0.8" stroke-linecap="round" stroke-linejoin="round" />
<path d="M651 139.6 h3.4 M651 139.6 v4.8 h4.8 v-2.6" fill="none" stroke="#e6e6e6" stroke-width="0.7" stroke-linecap="round" stroke-linejoin="round" />
<path d="M653 142.6 l3.4 -3.6" fill="none" stroke="#e6e6e6" stroke-width="1.0" stroke-linecap="round" stroke-linejoin="round" />
<path d="M642.4 138 h1.8 v1.8" fill="none" stroke="#e6e6e6" stroke-width="0.5" stroke-linecap="round" stroke-linejoin="round" />
<path d="M639.4 175.4 h6 v1.6 h-6 z" fill="#e6e6e6"/>
<path d="M639.4 177.8 h6 v1.6 h-6 z" fill="#e6e6e6"/>
<path d="M639.4 180.2 h6 v1.6 h-6 z" fill="#e6e6e6"/>
<path d="M655.2 175.6 h4.8 v5.2 h-4.8 z M658.2 175.6 v5.2" fill="none" stroke="#bdbdbd" stroke-width="0.7" stroke-linecap="round" stroke-linejoin="round" />
<path d="M669.6 176.4 l5 3.4 M674.6 176.4 l-5 3.4 M669.2 178.1 h5.8" fill="none" stroke="#e0e0e0" stroke-width="0.8" stroke-linecap="round" stroke-linejoin="round" />
<path d="M729 190.8 a2.3 2.3 0 1 1 -1 -1.9" fill="none" stroke="#ececec" stroke-width="0.8"/>
<path d="M727.2 187.6 l2 1 l-1.8 1.4 z" fill="#e6e6e6"/>
<path d="M732.6 189.9 h3.4 l-1.7 2.1 z" fill="#e6e6e6"/>
<path d="M639.3 391.9 h3 l1.4 1.4 v4 h-4.4 z" fill="none" stroke="#e6e6e6" stroke-width="0.8" stroke-linecap="round" stroke-linejoin="round" />
<path d="M651.5 392.9 h2 l0.8 -1 h2.8 v5.2 h-5.6 z" fill="none" stroke="#e6e6e6" stroke-width="0.8" stroke-linecap="round" stroke-linejoin="round" />
<path d="M653.9 395.1 h2 M654.9 394.1 v2" fill="none" stroke="#e6e6e6" stroke-width="0.6" stroke-linecap="round" stroke-linejoin="round" />
<path d="M665.1 395.7 l2.4 -2.4 l2.4 2.4" fill="none" stroke="#e6e6e6" stroke-width="1.0" stroke-linecap="round" stroke-linejoin="round" />
<path d="M678.4 393.3 l2.4 2.4 l2.4 -2.4" fill="none" stroke="#e6e6e6" stroke-width="1.0" stroke-linecap="round" stroke-linejoin="round" />
<path d="M690.4 392.3 h3.4 v3 h-3.4 z M692.2 394.1 h3.4 v3 h-3.4 z" fill="none" stroke="#bdbdbd" stroke-width="0.6" stroke-linecap="round" stroke-linejoin="round" />
<path d="M704.9 396.9 v-4.6 M707.6999999999999 392.1 v4.6" fill="none" stroke="#e6e6e6" stroke-width="0.9" stroke-linecap="round" stroke-linejoin="round" />
<path d="M704.9 391.5 l-1.5 1.8 h3 z M707.6999999999999 397.5 l-1.5 -1.8 h3 z" fill="#e6e6e6"/>
<circle cx="718.8" cy="392.9" r="1.5" fill="#e6e6e6"/>
<path d="M716.0 395.9 q2.8 -2.6 5.6 0 v1.6 h-5.6 z" fill="#e6e6e6"/>
<path d="M728.1999999999999 391.9 h5.2 v5.2 h-5.2 z" fill="none" stroke="#e6e6e6" stroke-width="0.9" stroke-linecap="round" stroke-linejoin="round" />
<path d="M729.4 393.1 l2.8 2.8 m0 -2.8 l-2.8 2.8" fill="none" stroke="#e6e6e6" stroke-width="0.8" stroke-linecap="round" stroke-linejoin="round" />
<path d="M620.6 390.4 h7 v7 h-7 z" fill="none" stroke="#4a4a4a" stroke-width="0.6" stroke-linecap="round" stroke-linejoin="round" />
<path d="M622 396 l4.2 -4.2" fill="none" stroke="#4a4a4a" stroke-width="0.6" stroke-linecap="round" stroke-linejoin="round" />
</svg>
</body></html>
